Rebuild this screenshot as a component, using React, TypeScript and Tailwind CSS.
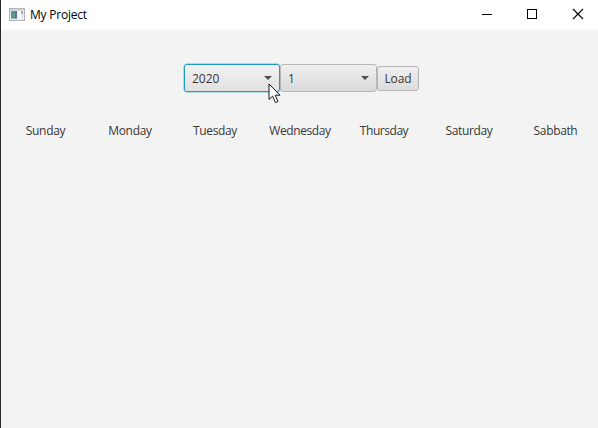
const days = [
  { name: "Sunday", style: "tracking-[-0.3px]" },
  { name: "Monday", style: "tracking-[-0.3px] pr-px" },
  { name: "Tuesday", style: "tracking-[-0.35px] pr-px" },
  { name: "Wednesday", style: "tracking-[-0.4px] pr-px" },
  { name: "Thursday", style: "tracking-[-0.45px] pr-[3px]" },
  { name: "Saturday", style: "tracking-[-0.35px] pr-[3px]" },
  { name: "Sabbath", style: "tracking-[-0.35px]" },
];

function TitleBar() {
  return (
    <header className="flex h-[31px] shrink-0 items-center bg-linear-to-b from-white from-90% to-[#f6f6f6] pb-px pl-2">
      <svg width="16" height="14" viewBox="0 0 16 14" className="mr-[5px] mb-px shrink-0">
        <rect x="0.5" y="0.5" width="15" height="12" fill="#e9eaed" stroke="#b2b3b9" />
        <rect x="1" y="1" width="14" height="1.5" fill="#d1d2d6" />
        <rect x="2" y="3" width="6" height="7.5" fill="#5b9694" />
        <rect x="6" y="3" width="2" height="7.5" fill="#5a7890" />
        <rect x="9" y="3" width="3" height="8" fill="#f8f8fa" />
        <rect x="12" y="3" width="2" height="3" fill="#a9aec0" />
      </svg>
      <span className="text-xs tracking-[-0.22px] text-black">My Project</span>
      <svg width="104" height="12" viewBox="0 0 104 12" className="mr-[13px] mb-[2px] ml-auto" fill="none" stroke="#000">
        <path d="M1 6.5h10" />
        <rect x="46.5" y="1.5" width="9" height="9" />
        <path d="M92 1l10 10M102 1l-10 10" strokeWidth="1.1" />
      </svg>
    </header>
  );
}

function Select({ value, focused = false }: { value: string; focused?: boolean }) {
  return (
    <div
      className={`flex h-7 items-center justify-between rounded-[3px] border bg-linear-to-b px-[7px] ${
        focused
          ? "w-24 border-[#1f9cc2] from-[#f3f3f3] to-[#e0e0e0] ring-[0.5px] ring-[#1f9cc2]/60"
          : "w-[97px] border-[#b5b5b5] from-[#efefef] to-[#dadada]"
      }`}
    >
      <span className="pt-px">{value}</span>
      <svg width="8" height="4" viewBox="0 0 8 4">
        <path d="M0 0h8L4 4z" fill="#505052" />
      </svg>
    </div>
  );
}

export default function App() {
  return (
    <div className="relative flex h-[428px] w-[598px] flex-col overflow-hidden border-l border-[#28282c] bg-[#f3f3f3] font-['Open_Sans',sans-serif] text-xs text-[#383838]">
      <TitleBar />
      <div className="mt-[33px] ml-[183px] flex items-center">
        <Select value="2020" focused />
        <Select value="1" />
        <button className="h-[25px] w-[42px] rounded-[3px] border border-[#b5b5b5] bg-linear-to-b from-[#efefef] to-[#dcdcdc] pt-px text-center tracking-[-0.1px]">
          Load
        </button>
      </div>
      <div className="mt-[30px] ml-[2px] grid w-[595px] grid-cols-7 text-center leading-[18px]">
        {days.map((day) => (
          <span key={day.name} className={day.style}>
            {day.name}
          </span>
        ))}
      </div>
      <svg width="13" height="21" viewBox="0 0 13 21" className="absolute top-[83px] left-[267px]">
        <path d="M1 1v15.5l3.6-3.4 2.8 6.5 2.6-1.2-2.8-6.2H12z" fill="#fff" stroke="#16161c" />
      </svg>
    </div>
  );
}
